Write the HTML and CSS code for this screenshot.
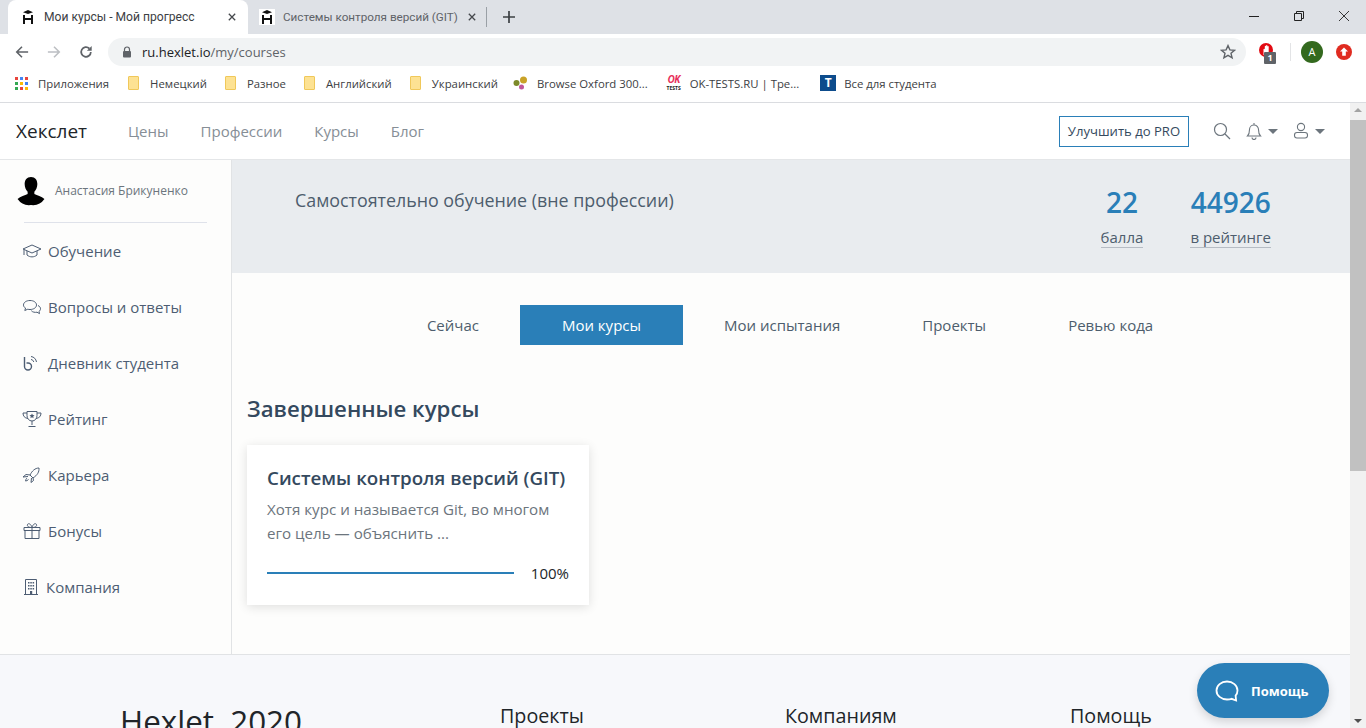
FILE: index.html
```html
<!DOCTYPE html>
<html lang="ru">
<head>
  <meta charset="UTF-8">
  <title>Мои курсы - Мой прогресс</title>
  <link rel="stylesheet" href="styles.css">
</head>
<body>
  <div class="browser">
    <!-- Вкладки -->
    <div class="tabstrip">
      <div class="tab tab-active">
        <svg class="favicon" viewBox="0 0 16 16"><path d="M3 3.2L8 1l5 2.2L8 5z" fill="#111"/><path d="M4 6v9M12 6v9M4 10h8" stroke="#111" stroke-width="2" fill="none"/></svg>
        <span class="tab-title">Мои курсы - Мой прогресс</span>
        <svg class="tab-close" viewBox="0 0 10 10"><path d="M1 1l8 8M9 1l-8 8" stroke="#45484c" stroke-width="1.6"/></svg>
      </div>
      <div class="tab">
        <span class="favicon-box"><svg class="favicon" viewBox="0 0 16 16"><path d="M3 3.2L8 1l5 2.2L8 5z" fill="#111"/><path d="M4 6v9M12 6v9M4 10h8" stroke="#111" stroke-width="2" fill="none"/></svg></span>
        <span class="tab-title tab-title-dim">Системы контроля версий (GIT)</span>
        <svg class="tab-close" viewBox="0 0 10 10"><path d="M1 1l8 8M9 1l-8 8" stroke="#45484c" stroke-width="1.6"/></svg>
      </div>
      <span class="tab-sep"></span>
      <svg class="new-tab" viewBox="0 0 12 12"><path d="M6 0v12M0 6h12" stroke="#3c4043" stroke-width="1.7"/></svg>
      <div class="window-btns">
        <svg viewBox="0 0 10 10"><path d="M0 5.5h10" stroke="#222" stroke-width="1"/></svg>
        <svg viewBox="0 0 10 10"><path d="M.5 2.5h7v7h-7zM2.5 2.5v-2h7v7h-2" stroke="#222" fill="none"/></svg>
        <svg viewBox="0 0 10 10"><path d="M0 0l10 10M10 0L0 10" stroke="#222" stroke-width=".9"/></svg>
      </div>
    </div>

    <!-- Адресная строка -->
    <div class="toolbar">
      <svg class="nav-btn" viewBox="0 0 16 16"><path d="M15 8H2M8 2L2 8l6 6" stroke="#5f6368" stroke-width="1.8" fill="none"/></svg>
      <svg class="nav-btn" viewBox="0 0 16 16"><path d="M1 8h13M8 2l6 6-6 6" stroke="#bcbfc3" stroke-width="1.8" fill="none"/></svg>
      <svg class="nav-btn" viewBox="0 0 16 16"><path d="M13.500 8A5.500 5.500 0 1 1 11.800 4" stroke="#5f6368" stroke-width="2" fill="none"/><path d="M14.500 1v5.500H9z" fill="#5f6368"/></svg>
      <div class="omnibox">
        <svg class="lock" viewBox="0 0 10 12"><path d="M2.500 5V3.500a2.500 2.500 0 0 1 5 0V5" stroke="#5f6368" stroke-width="1.200" fill="none"/><rect x="1" y="5" width="8" height="6.500" rx="1" fill="#5f6368"/></svg>
        <span class="url">ru.hexlet.io<span class="url-path">/my/courses</span></span>
        <svg class="star" viewBox="0 0 16 16"><path d="M8 1.600l1.900 4.300 4.600.4-3.500 3 1.100 4.600L8 11.400l-4.100 2.500L5 9.300l-3.500-3 4.600-.4z" stroke="#5f6368" stroke-width="1.400" fill="none"/></svg>
      </div>
      <div class="ext-block">
        <svg viewBox="0 0 14 14"><circle cx="7" cy="7" r="7" fill="#e20a12"/><path d="M4.500 12V6.500c0-1 1.300-1 1.300 0V3.500c0-1 1.300-1 1.300 0v-.8c0-1 1.300-1 1.300 0v1c0-1 1.300-1 1.300 0v4.800c0 2-1 3.500-2.600 3.500z" fill="#fff"/></svg>
        <span class="ext-badge">1</span>
      </div>
      <span class="ext-sep"></span>
      <span class="avatar-a">A</span>
      <svg class="ext-up" viewBox="0 0 16 16"><circle cx="8" cy="8" r="8" fill="#e02b20"/><path d="M8 3.400l4 4.200H9.800v4.200H6.200V7.600H4z" fill="#fff"/></svg>
    </div>

    <!-- Закладки -->
    <div class="bookmarks">
      <span class="bm bm-apps">
        <svg class="bm-icon" viewBox="0 0 13 13"><g><rect width="3" height="3" fill="#e8453c"/><rect x="5" width="3" height="3" fill="#4285f4"/><rect x="10" width="3" height="3" fill="#e8453c"/><rect y="5" width="3" height="3" fill="#34a853"/><rect x="5" y="5" width="3" height="3" fill="#fbbc05"/><rect x="10" y="5" width="3" height="3" fill="#4285f4"/><rect y="10" width="3" height="3" fill="#34a853"/><rect x="5" y="10" width="3" height="3" fill="#e8453c"/><rect x="10" y="10" width="3" height="3" fill="#fbbc05"/></g></svg>
        Приложения
      </span>
      <span class="bm"><span class="folder"></span>Немецкий</span>
      <span class="bm"><span class="folder"></span>Разное</span>
      <span class="bm"><span class="folder"></span>Английский</span>
      <span class="bm"><span class="folder"></span>Украинский</span>
      <span class="bm bm-oxford">
        <svg class="bm-icon-lg" viewBox="0 0 16 16"><circle cx="11" cy="5" r="3.500" fill="#c9a227"/><circle cx="4" cy="8" r="3" fill="#7d8a2a"/><circle cx="9" cy="12" r="2.500" fill="#c0569a"/></svg>
        Browse Oxford 300...
      </span>
      <span class="bm bm-ok">
        <span class="ok-icon">OK<small>TESTS</small></span>
        OK-TESTS.RU | Тре...
      </span>
      <span class="bm"><span class="t-icon">T</span>Все для студента</span>
    </div>

    <div class="viewport">
      <div class="page">
        <!-- Шапка сайта -->
        <header class="site-nav">
          <a class="brand">Хекслет</a>
          <nav class="site-links">
            <a>Цены</a>
            <a>Профессии</a>
            <a>Курсы</a>
            <a>Блог</a>
          </nav>
          <a class="pro-btn">Улучшить до PRO</a>
          <svg class="nav-icon" viewBox="0 0 18 18"><circle cx="7.500" cy="7.500" r="6" stroke="#6c757d" stroke-width="1.200" fill="none"/><path d="M12 12l5 5" stroke="#6c757d" stroke-width="1.200"/></svg>
          <span class="nav-drop">
            <svg class="nav-icon" viewBox="0 0 16 18"><path d="M1.500 14c1.500-1.500 2-2.500 2-6.500a4.500 4.500 0 0 1 9 0c0 4 .5 5 2 6.500zM8 1v2M6 15.500a2 2 0 0 0 4 0" stroke="#6c757d" stroke-width="1.100" fill="none"/></svg>
            <i class="caret"></i>
          </span>
          <span class="nav-drop">
            <svg class="nav-icon" viewBox="0 0 16 18"><circle cx="8" cy="5" r="3.600" stroke="#6c757d" stroke-width="1.100" fill="none"/><rect x="1.500" y="10.500" width="13" height="5.500" rx="2.500" stroke="#6c757d" stroke-width="1.100" fill="none"/></svg>
            <i class="caret"></i>
          </span>
        </header>

        <div class="layout">
          <!-- Боковое меню -->
          <aside class="sidebar">
            <div class="profile">
              <svg class="profile-pic" viewBox="0 0 30 30"><path d="M15 0c4.500 0 6.800 3.400 6.800 7.600 0 3.400-1.400 6.400-3.200 8.200v2.400c3 1.400 7.600 2.600 10.800 5.400A15 15 0 0 1 15 30 15 15 0 0 1 .6 23.600c3.200-2.800 7.800-4 10.800-5.400v-2.400c-1.800-1.800-3.200-4.800-3.200-8.200C8.200 3.400 10.500 0 15 0z" fill="#000"/></svg>
              <span class="profile-name">Анастасия Брикуненко</span>
            </div>
            <ul class="side-menu">
              <li>
                <svg viewBox="0 0 20 16"><path d="M10 2L1 6l9 4 9-4zM5 8v4c3 2.500 7 2.500 10 0V8M2 6.500V12" stroke="#4d5d73" stroke-width="1" fill="none"/></svg>
                Обучение
              </li>
              <li>
                <svg viewBox="0 0 20 16"><path d="M8 1.500c3.800 0 6.500 2 6.500 4.500s-2.700 4.500-6.500 4.500c-.8 0-1.500 0-2.200-.3L2.800 11.500l.7-2.500C2 8.200 1.500 7.200 1.500 6 1.500 3.500 4.200 1.500 8 1.500zM16 6.500c1.700.8 2.500 2 2.500 3.300 0 1-.5 1.900-1.500 2.600l.5 2.200-2.500-1.400c-2 .4-4.500 0-5.700-1.500" stroke="#4d5d73" stroke-width="1" fill="none"/></svg>
                Вопросы и ответы
              </li>
              <li>
                <svg viewBox="0 0 20 16"><path d="M2.500 2v9.500a3.500 3.500 0 1 0 3.500-3.500H4.500" stroke="#4d5d73" stroke-width="1.400" fill="none"/><path d="M9 1.500c3 .4 5 2.500 5.500 5.500M9 4.500c1.500.2 2.400 1.100 2.700 2.500" stroke="#4d5d73" stroke-width="1" fill="none"/></svg>
                Дневник студента
              </li>
              <li>
                <svg viewBox="0 0 20 16"><path d="M5 .5h10v4c0 3-2 5.500-5 5.500S5 7.500 5 4.500zM5 2H1c0 3 1.500 5 5 5.500M15 2h4c0 3-1.500 5-5 5.500M10 10v4M6.500 15.500h7" stroke="#4d5d73" stroke-width="1" fill="none"/><path d="M10 2.500l.8 1.600 1.700.2-1.300 1.200.4 1.700-1.600-.9-1.600.9.4-1.700-1.300-1.200 1.700-.2z" fill="#4d5d73"/></svg>
                Рейтинг
              </li>
              <li>
                <svg viewBox="0 0 20 16"><path d="M17 1c.3 4-1.500 7-6 10l-3-3c2-4 5-7 9-7zM8 8l-4-.5L1 10l5-.5M11 11l.5 2.500-2.500 2 .5-4.500M5 11c-1 1-1.500 2-1.500 3 1 0 2-.5 3-1.500" stroke="#4d5d73" stroke-width="1" fill="none"/></svg>
                Карьера
              </li>
              <li>
                <svg viewBox="0 0 20 16"><path d="M2 4.500h16v3H2zM3 7.500V15.500h14V7.500M10 4.500V15.500M10 4.500C6 4.500 5 3 5.500 1.500S9 .5 10 4.500zM10 4.500c4 0 5-1.500 4.500-3S11 .5 10 4.500z" stroke="#4d5d73" stroke-width="1" fill="none"/></svg>
                Бонусы
              </li>
              <li class="side-company">
                <svg viewBox="0 0 14 16"><path d="M1.500.5h11v15h-11zM0 15.500h14" stroke="#4d5d73" stroke-width="1" fill="none"/><path d="M4 3h1.500v1.500H4zM6.300 3h1.500v1.500H6.300zM8.600 3h1.500v1.500H8.600zM4 6h1.500v1.500H4zM6.300 6h1.500v1.500H6.300zM8.600 6h1.500v1.500H8.600zM4 9h1.500v1.500H4zM6.300 9h1.500v1.500H6.300zM8.600 9h1.500v1.500H8.600zM6 12h2.200v3.500H6z" fill="#4d5d73"/></svg>
                Компания
              </li>
            </ul>
          </aside>

          <main class="content">
            <section class="banner">
              <h2 class="banner-title">Самостоятельно обучение (вне профессии)</h2>
              <div class="stat stat-points">
                <strong>22</strong>
                <span>балла</span>
              </div>
              <div class="stat stat-rating">
                <strong>44926</strong>
                <span>в рейтинге</span>
              </div>
            </section>

            <div class="tabs">
              <a>Сейчас</a>
              <a class="active">Мои курсы</a>
              <a>Мои испытания</a>
              <a>Проекты</a>
              <a>Ревью кода</a>
            </div>

            <section class="courses">
              <h3>Завершенные курсы</h3>
              <div class="card">
                <h4>Системы контроля версий (GIT)</h4>
                <p>Хотя курс и называется Git, во многом его цель — объяснить ...</p>
                <div class="progress-row">
                  <div class="progress"><div class="progress-fill" style="width: 100%"></div></div>
                  <span>100%</span>
                </div>
              </div>
            </section>
          </main>
        </div>

        <footer class="site-footer">
          <div class="foot-brand">Hexlet, 2020</div>
          <div class="foot-col">Проекты</div>
          <div class="foot-col">Компаниям</div>
          <div class="foot-col">Помощь</div>
        </footer>

        <a class="help-btn">
          <svg viewBox="0 0 24 22"><path d="M12 1.500c5.800 0 10.500 3.900 10.500 9 0 2-.7 3.700-1.900 5.100l.5 4.900-4.500-1.700c-1.400.5-3 .7-4.600.7-5.800 0-10.500-3.900-10.500-9s4.700-9 10.500-9z" stroke="#fff" stroke-width="1.800" fill="none"/></svg>
          Помощь
        </a>
      </div>

      <div class="scrollbar">
        <i class="arrow-up"></i>
        <div class="thumb"></div>
        <i class="arrow-down"></i>
      </div>
    </div>
  </div>
</body>
</html>
```

FILE: styles.css
```css
html, body {
  margin: 0;
  padding: 0;
  height: 100%;
  overflow: hidden;
}

body {
  font-family: 'Open Sans', sans-serif;
  color: #34495e;
}

a {
  text-decoration: none;
}

.browser {
  height: 728px;
  display: flex;
  flex-direction: column;
}

/* вкладки */
.tabstrip {
  height: 34px;
  flex: none;
  background: #dee1e6;
  display: flex;
  align-items: flex-end;
  padding-left: 8px;
}

.tab {
  height: 34px;
  display: flex;
  align-items: center;
  box-sizing: border-box;
  font-family: Roboto, sans-serif;
  font-size: 12.1px;
  color: #3c4043;
}

.tab-active {
  width: 240px;
  padding-left: 12px;
  background: #fff;
  border-radius: 8px 8px 0 0;
}

.tab + .tab {
  width: 238px;
  padding-left: 11px;
}

.favicon {
  width: 16px;
  height: 16px;
  flex: none;
}

.favicon-box {
  width: 16px;
  height: 16px;
  background: #fff;
  display: flex;
}

.tab-title {
  margin-left: 8px;
  width: 160px;
  white-space: nowrap;
  overflow: hidden;
}

.tab-title-dim {
  margin-left: 8px;
  width: 177px;
  font-size: 11.7px;
  color: #5f6368;
}

.tab-close {
  width: 8px;
  height: 8px;
  margin-left: 8px;
  flex: none;
}

.tab-active .tab-close {
  margin-left: 24px;
}

.tab-sep {
  width: 1px;
  height: 20px;
  background: #9aa0a6;
  margin: 0 0 7px 0;
}

.new-tab {
  width: 12px;
  height: 12px;
  margin: 0 0 11px 16px;
}

.window-btns {
  margin-left: auto;
  display: flex;
  gap: 35px;
  padding: 0 17px 13px 0;
}

.window-btns svg {
  width: 10px;
  height: 10px;
}

/* адресная строка */
.toolbar {
  height: 34px;
  flex: none;
  background: #fff;
  display: flex;
  align-items: center;
  padding: 2px 10px 0 15px;
  box-sizing: border-box;
}

.nav-btn {
  width: 14px;
  height: 14px;
  margin-right: 18px;
  flex: none;
}

.omnibox {
  margin-left: -3px;
  width: 1138px;
  height: 28px;
  background: #f1f3f4;
  border-radius: 14px;
  display: flex;
  align-items: center;
  padding: 0 10px 0 14px;
  box-sizing: border-box;
  flex: none;
}

.lock {
  width: 10px;
  height: 12px;
}

.url {
  margin-left: 10px;
  font-size: 13px;
  color: #202124;
}

.url-path {
  color: #5f6368;
}

.star {
  margin-left: auto;
  width: 16px;
  height: 16px;
}

.ext-block {
  position: relative;
  width: 14px;
  height: 14px;
  margin: -4px 0 0 13px;
}

.ext-block svg {
  width: 14px;
  height: 14px;
  display: block;
}

.ext-badge {
  position: absolute;
  left: 5px;
  top: 9px;
  width: 12px;
  height: 12px;
  background: #5f6368;
  color: #fff;
  font-size: 9px;
  font-weight: 700;
  line-height: 12px;
  text-align: center;
  border-radius: 1px;
}

.ext-sep {
  width: 1px;
  height: 18px;
  background: #e3e4e6;
  margin: 0 10px 0 17px;
}

.avatar-a {
  width: 22px;
  height: 22px;
  border-radius: 50%;
  background: #33691e;
  color: #fff;
  font-size: 11px;
  line-height: 22px;
  text-align: center;
}

.ext-up {
  width: 16px;
  height: 16px;
  margin-left: 13px;
}

/* закладки */
.bookmarks {
  height: 35px;
  flex: none;
  background: #fff;
  border-bottom: 1px solid #dadce0;
  box-sizing: border-box;
  display: flex;
  align-items: center;
  padding: 0 0 4px 15px;
  font-size: 11.35px;
  color: #3c4043;
}

.bm {
  display: flex;
  align-items: center;
  margin-right: 18px;
  white-space: nowrap;
}

.bm-apps {
  margin-right: 19px;
}

.bm-oxford {
  margin-left: -4px;
}

.bm-ok {
  margin-right: 21px;
}

.bm-icon {
  width: 13px;
  height: 13px;
  margin-right: 10px;
}

.bm-icon-lg {
  width: 17px;
  height: 16px;
  margin-right: 8px;
}

.folder {
  width: 11px;
  height: 14px;
  background: #fde293;
  border: 1px solid #f0c85a;
  box-sizing: border-box;
  border-radius: 1px;
  margin-right: 11px;
}

.ok-icon {
  width: 16px;
  margin-right: 8px;
  color: #e8315b;
  font-size: 10px;
  font-weight: 700;
  font-style: italic;
  line-height: 11px;
  letter-spacing: -0.5px;
  text-align: center;
}

.ok-icon small {
  display: block;
  color: #222;
  font-size: 5px;
  font-weight: 700;
  font-style: normal;
  line-height: 7px;
  letter-spacing: 0;
}

.t-icon {
  width: 16px;
  height: 16px;
  background: #0d4c8c;
  color: #fff;
  font-size: 12px;
  font-weight: 700;
  line-height: 16px;
  text-align: center;
  margin-right: 8px;
}

/* страница */
.viewport {
  flex: 1;
  min-height: 0;
  display: flex;
}

.page {
  flex: 1;
  min-width: 0;
  position: relative;
  overflow: hidden;
  background: #fdfdfc;
}

.site-nav {
  height: 57px;
  background: #fff;
  border-bottom: 1px solid #e4e6e8;
  box-sizing: border-box;
  display: flex;
  align-items: center;
  padding: 0 25px 0 16px;
}

.brand {
  font-size: 19px;
  color: #212529;
}

.site-links {
  display: flex;
  gap: 32px;
  margin-left: 41px;
  font-size: 15px;
  color: #868e96;
}

.pro-btn {
  margin-left: auto;
  width: 130px;
  height: 31px;
  box-sizing: border-box;
  border: 1px solid #2a7fb8;
  color: #34495e;
  font-size: 13.1px;
  line-height: 29px;
  text-align: center;
}

.nav-icon {
  width: 18px;
  height: 18px;
  margin-left: 24px;
  flex: none;
}

.nav-drop {
  display: flex;
  align-items: center;
  margin-left: 14px;
}

.nav-drop .nav-icon {
  margin-left: 0;
}

.caret {
  width: 0;
  height: 0;
  border: 5px solid transparent;
  border-top-color: #6c757d;
  border-bottom: 0;
  margin-left: 5px;
}

.layout {
  display: flex;
  height: 494px;
  border-bottom: 1px solid #e1e3e5;
}

.sidebar {
  width: 231px;
  flex: none;
  border-right: 1px solid #e1e3e5;
}

.profile {
  height: 63px;
  margin: 0 24px 0 17px;
  box-sizing: border-box;
  display: flex;
  align-items: center;
  padding-bottom: 1px;
  position: relative;
}

.profile::after {
  content: "";
  position: absolute;
  left: 7px;
  right: 0;
  bottom: 0;
  height: 1px;
  background: #dfe2ea;
}

.profile-pic {
  width: 28px;
  height: 30px;
  flex: none;
}

.profile-name {
  margin: 0 0 2px 10px;
  font-size: 12px;
  color: #6c757d;
  white-space: nowrap;
}

.side-menu {
  list-style: none;
  margin: 0;
  padding: 0 0 0 22px;
}

.side-menu li {
  height: 56px;
  display: flex;
  align-items: center;
  font-size: 15px;
  color: #4d5d73;
}

.side-menu svg {
  width: 20px;
  height: 16px;
  margin-right: 6px;
  flex: none;
}

.side-menu .side-company svg {
  width: 14px;
  margin: 0 8px 0 2px;
}

.content {
  flex: 1;
  min-width: 0;
}

.banner {
  height: 113px;
  background: #e9ecef;
  box-sizing: border-box;
  display: flex;
  align-items: flex-start;
  padding: 27px 79px 0 63px;
}

.banner-title {
  margin: -1px auto 0 0;
  font-size: 17.85px;
  font-weight: 400;
  line-height: 28px;
  color: #4d5d6d;
}

.stat {
  display: flex;
  flex-direction: column;
  align-items: center;
  margin-left: 48px;
}

.stat-rating {
  margin-left: 47px;
}

.stat strong {
  font-size: 28px;
  font-weight: 600;
  line-height: 30px;
  color: #2a7fb8;
}

.stat span {
  margin-top: 10px;
  font-size: 15px;
  line-height: 20px;
  color: #4d5d6d;
  border-bottom: 1px solid #b6bcc4;
}

.tabs {
  display: flex;
  justify-content: center;
  margin-top: 32px;
  padding-right: 2px;
  font-size: 15px;
  color: #4d5d6d;
}

.tabs a {
  height: 40px;
  line-height: 41px;
  padding: 0 41px;
}

.tabs .active {
  padding: 0 42px;
  background: #2a7fb8;
  color: #fff;
}

.courses {
  padding: 0 15px;
}

.courses h3 {
  margin: 49px 0 0;
  font-size: 22.2px;
  font-weight: 600;
  line-height: 30px;
  color: #34495e;
}

.card {
  width: 342px;
  height: 160px;
  box-sizing: border-box;
  margin-top: 21px;
  padding: 21px 20px 0;
  background: #fff;
  box-shadow: 0 2px 10px rgba(0, 0, 0, 0.12);
}

.card h4 {
  margin: 0;
  font-size: 18.75px;
  font-weight: 600;
  line-height: 24px;
  color: #34495e;
  white-space: nowrap;
}

.card p {
  margin: 7px 0 0;
  font-size: 15.15px;
  line-height: 24px;
  color: #6c757d;
}

.progress-row {
  display: flex;
  align-items: center;
  margin-top: 18px;
  font-size: 15px;
  color: #212529;
}

.progress {
  width: 247px;
  height: 2px;
  background: #e9ecef;
  margin-right: 17px;
}

.progress-fill {
  height: 100%;
  background: #2a7fb8;
}

.site-footer {
  height: 80px;
  background: #f7f8fb;
  display: flex;
  align-items: flex-start;
  padding: 47px 0 0 120px;
  box-sizing: border-box;
  color: #212529;
}

.foot-brand {
  flex: none;
  width: 380px;
  font-size: 31.4px;
  font-weight: 400;
  line-height: 38px;
}

.foot-col {
  flex: none;
  width: 285px;
  font-size: 19.7px;
  font-weight: 500;
  line-height: 24px;
  padding-top: 2px;
  color: #212529;
}

.help-btn {
  position: absolute;
  left: 1197px;
  top: 560px;
  width: 132px;
  height: 55px;
  border-radius: 28px;
  background: #2a7fb8;
  box-shadow: 0 4px 10px rgba(0, 0, 0, 0.15);
  display: flex;
  align-items: center;
  color: #fff;
  font-size: 13px;
  font-weight: 700;
  padding-left: 18px;
  box-sizing: border-box;
}

.help-btn svg {
  width: 24px;
  height: 22px;
  margin-right: 12px;
}

/* полоса прокрутки */
.scrollbar {
  width: 16px;
  flex: none;
  background: #f1f1f1;
  display: flex;
  flex-direction: column;
  align-items: center;
  justify-content: space-between;
  padding: 5px 0;
  box-sizing: border-box;
  position: relative;
}

.thumb {
  position: absolute;
  top: 17px;
  left: 0;
  right: 0;
  height: 351px;
  background: #c1c1c1;
}

.arrow-up, .arrow-down {
  width: 0;
  height: 0;
  border: 4px solid transparent;
}

.arrow-up {
  border-bottom: 4px solid #a3a3a3;
  border-top: 0;
}

.arrow-down {
  border-top: 4px solid #505050;
  border-bottom: 0;
}
```
